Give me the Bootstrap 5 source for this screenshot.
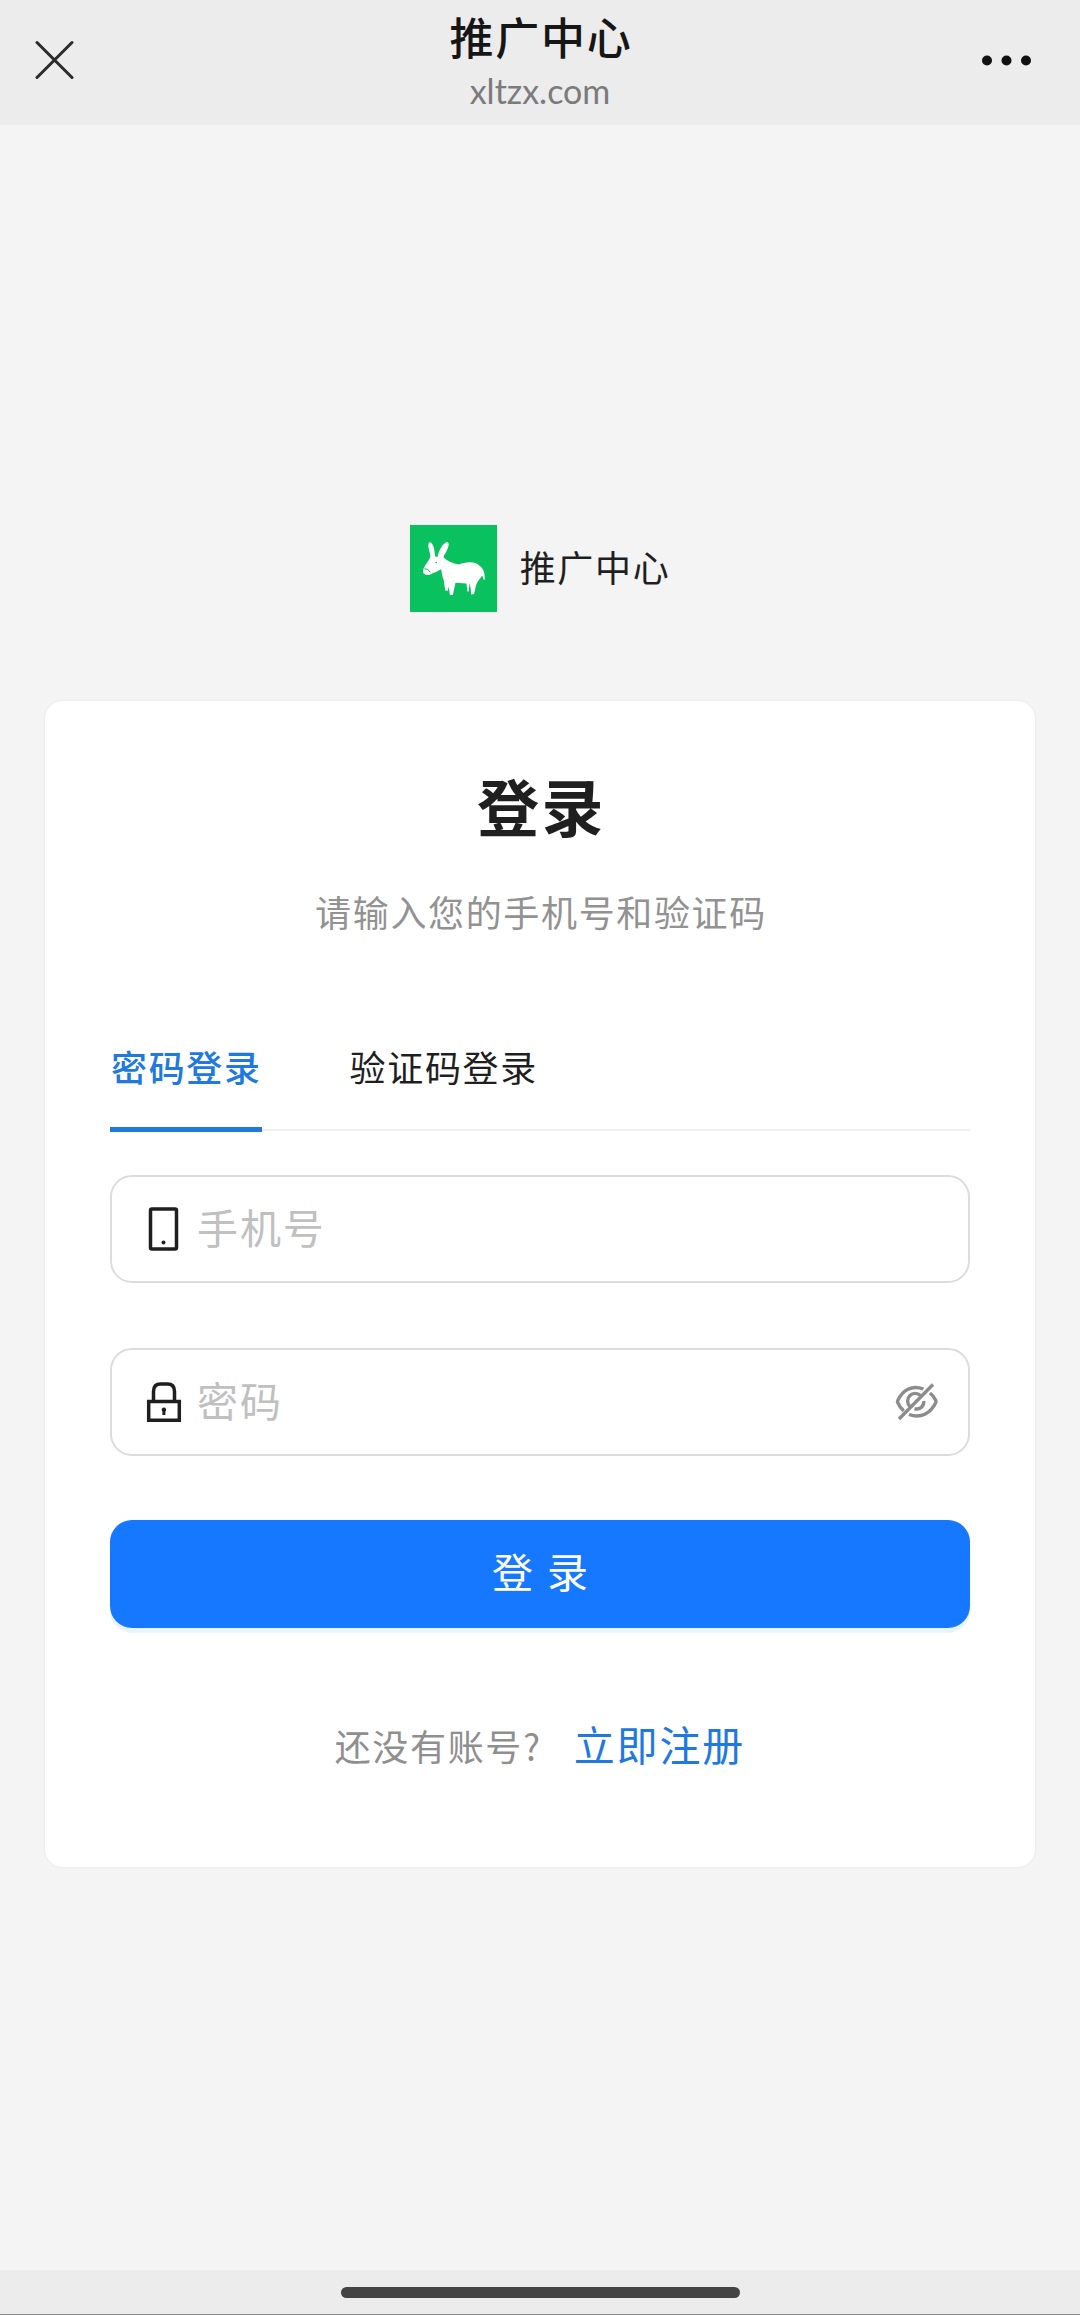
<!DOCTYPE html>
<html lang="zh-CN">
<head>
<meta charset="utf-8">
<meta name="viewport" content="width=device-width, initial-scale=1">
<title>推广中心</title>
<link href="https://cdn.jsdelivr.net/npm/bootstrap@5.3.0/dist/css/bootstrap.min.css" rel="stylesheet">
<style>
body{font-family:"Noto Sans CJK SC","Noto Sans",sans-serif;background:#f4f4f4;color:#1f1f1f;height:2315px;overflow:hidden}
svg{display:block;flex:none}
.topbar{height:125px;background:#ececec;padding:0 35px}
.side{width:110px;padding-bottom:5px}
.side-end{padding-right:8px;padding-bottom:0}
.site-title{font-size:44px;letter-spacing:1.7px;font-weight:500;line-height:60px;margin-top:6px;padding-left:2px;color:#161616}
.site-url{font-family:Lato,"Noto Sans",sans-serif;font-size:34px;line-height:40px;color:#7b7b7b;margin-top:5px}
.brand-row{margin-top:400px;height:87px;gap:23px}
.brand-row .t36{padding-bottom:5px}
.t36{font-size:36px;letter-spacing:1.65px;line-height:54px;white-space:nowrap}
.login-box{width:990px;height:1166px;margin:89px auto 0;border:0;border-radius:18px;padding:0 65px;box-shadow:0 0 3px rgba(0,0,0,.06)}
.login-title{font-size:62px;letter-spacing:2.5px;font-weight:700;line-height:90px;margin:59px 0 0;padding-left:3px}
.login-sub{color:#929292;margin:34px 0 0;padding-left:2px}
.tabs-line{margin-top:100px;height:93px;gap:87px;border-bottom:2px solid #f0f0f0}
.tabs-line .nav-link{padding:1px 0 0 1px;height:94px;color:#1f1f1f;border-radius:0}
.tabs-line .nav-link.active{color:#2079df;border-bottom:5px solid #2079df;font-weight:500}
.field{height:108px;border:2px solid #dcdcdc;border-radius:22px;padding:0 30px 0 34px;background:#fff}
.field input{font-size:41px;letter-spacing:1.9px;padding:0 0 6px;margin-left:15px;height:70px;line-height:64px;background:none}
.field input:focus{box-shadow:none}
.field input::placeholder{color:#c0c0c0;opacity:1}
.f1{margin-top:44px}.f2{margin-top:65px}
.btn-login{height:108px;margin-top:64px;border:0;border-radius:22px;background:#1677ff;font-size:41px;word-spacing:5px;padding:0 0 6px;box-shadow:0 5px 0 #e9f4ff}
.signup{margin-top:80px;height:70px;color:#8f8f8f}
.signup .t36{padding-top:3px}
.signup a{font-size:41px;letter-spacing:1.9px;color:#2079df;margin-left:32px;line-height:64px}
.homebar{height:45px;background:#ececec;border-bottom:1px solid #8a8a8a;padding-top:17px}
.pill{width:399px;height:11px;border-radius:6px;background:#444}
</style>
</head>
<body class="d-flex flex-column">
<header class="topbar d-flex align-items-stretch justify-content-between">
  <div class="side d-flex align-items-center"><svg width="40" height="40" viewBox="0 0 40 40" stroke="#2a2a2a" stroke-width="3" stroke-linecap="round"><path d="M2 2.500 37 37.500M37 2.500 2 37.500"/></svg></div>
  <div class="text-center">
    <div class="site-title">推广中心</div>
    <div class="site-url">xltzx.com</div>
  </div>
  <div class="side side-end d-flex align-items-center justify-content-end"><svg width="60" height="16" viewBox="0 0 60 16" fill="#111"><circle cx="10" cy="5.500" r="5"/><circle cx="29.500" cy="5.500" r="5"/><circle cx="49" cy="5.500" r="5"/></svg></div>
</header>
<main class="flex-grow-1">
  <div class="brand-row d-flex align-items-center justify-content-center">
    <svg width="87" height="87" viewBox="30 31 262 262">
      <path fill="#0ac160" d="M30 31h262v262H30z"/>
      <path fill="#fff" d="M87 84C93 80 101 91 103 106L106 126 113 127C116 108 130 84 142 82 151 84 146 103 132 123L131 129C143 140 158 148 178 150 195 143 225 138 241 155 252 163 256 177 255 196L252 196C251 190 249 187 247 183 242 193 233 199 229 212L223 239 214 240 213 224 209 206 207 231 203 231 200 207 167 205 159 242 150 242 147 216 144 229 136 228 132 199C128 188 125 174 124 164 112 171 100 175 91 180 83 184 71 181 69 172 69 158 82 147 90 130 96 121 80 99 87 84Z"/>
      <path d="M73 163Q85 160 91 174" fill="none" stroke="#0ac160" stroke-width="3"/><circle cx="109" cy="144" r="2.500" fill="#0ac160"/>
    </svg>
    <div class="t36">推广中心</div>
  </div>
  <section class="card login-box">
    <h1 class="login-title text-center">登录</h1>
    <p class="login-sub t36 text-center">请输入您的手机号和验证码</p>
    <nav class="nav tabs-line flex-nowrap">
      <a class="nav-link active t36" href="#">密码登录</a>
      <a class="nav-link t36" href="#">验证码登录</a>
    </nav>
    <div class="field f1 d-flex align-items-center">
      <svg width="36" height="46" viewBox="0 0 36 46"><rect x="4.500" y="3" width="26" height="40" rx="1.500" fill="none" stroke="#1f1f1f" stroke-width="3.500"/><circle cx="17.500" cy="36.500" r="2" fill="#1f1f1f"/></svg>
      <input class="form-control border-0" type="text" placeholder="手机号">
    </div>
    <div class="field f2 d-flex align-items-center">
      <svg width="36" height="46" viewBox="0 0 36 46"><g fill="none" stroke="#1f1f1f" stroke-width="3.500"><path d="M2.700 22.500h30.600v18.800H2.700zM7.500 22.500V12.500Q7.500 5 14.500 5H21.500Q28.500 5 28.500 12.500V22.500"/></g><path d="M17.700 28.500a2.300 2.300 0 0 1 1.700 4V36h-3v-3.500a2.300 2.300 0 0 1 1.300-4Z" fill="#1f1f1f"/></svg>
      <input class="form-control border-0" type="password" placeholder="密码">
      <svg width="43" height="39" viewBox="0 0 43 39" fill="none" stroke="#8c8c8c" stroke-width="3.400"><path d="M28.500 6C16.500 1.500 7.500 7.500 2.800 17.500Q2.300 18.700 2.800 19.800C4.200 23 6.200 25.700 8.700 27.900M14 31.500C26.500 36 36 29.500 40.700 19.700Q41.200 18.500 40.700 17.300C39.300 14.500 37.500 12 35 10M25.500 12.500A7.500 7.500 0 0 0 15 23.500M28.700 18A7 7 0 0 1 19.500 25.600M38 1.500 4 36"/></svg>
    </div>
    <button class="btn btn-primary btn-login w-100" type="button">登 录</button>
    <div class="signup d-flex align-items-center justify-content-center"><span class="t36">还没有账号?</span><a class="text-decoration-none" href="#">立即注册</a></div>
  </section>
</main>
<footer class="homebar d-flex justify-content-center"><div class="pill"></div></footer>
<script src="https://cdn.jsdelivr.net/npm/bootstrap@5.3.0/dist/js/bootstrap.bundle.min.js"></script>
</body>
</html>
